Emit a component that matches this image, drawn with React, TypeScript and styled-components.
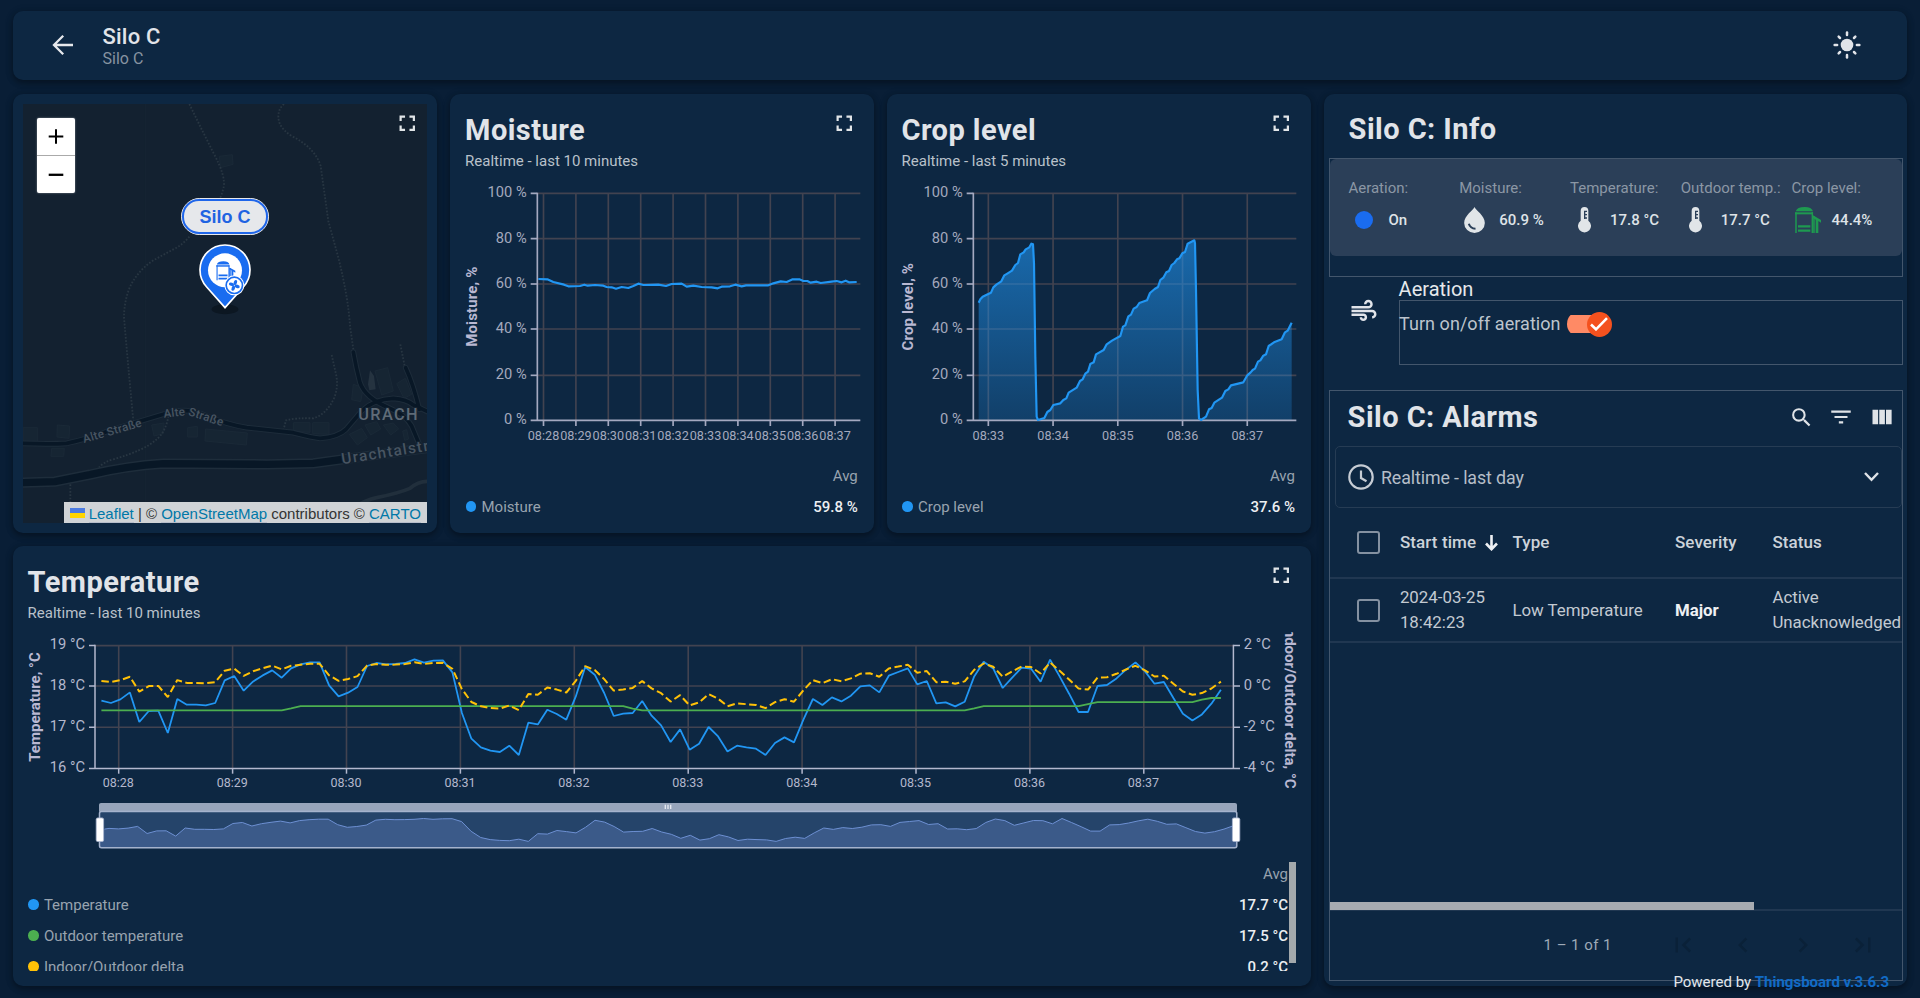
import React from "react";
import styled, { createGlobalStyle } from "styled-components";
import {
  MdAir,
  MdChevronLeft,
  MdChevronRight,
  MdFilterList,
  MdFirstPage,
  MdFullscreen,
  MdLastPage,
  MdSearch,
} from "react-icons/md";

const Global = createGlobalStyle`
  * { box-sizing: border-box; }
  body {
    margin: 0;
    background: #091e36;
    color: #e1e4e9;
    font-family: Roboto, "Liberation Sans", sans-serif;
    overflow: hidden;
  }
  svg { display: block; flex: none; }
  svg text { font-family: Roboto, "Liberation Sans", sans-serif; }
`;

const Page = styled.div`
  width: 1920px;
  height: 998px;
  padding: 11px 13px 0;
  position: relative;
  overflow: hidden;
`;

const Card = styled.section`
  background: #0d2742;
  border-radius: 10px;
  box-shadow: 0 3px 6px rgba(0, 0, 0, 0.32), 0 1px 10px rgba(0, 0, 0, 0.12);
  min-width: 0;
`;

const Header = styled(Card)`
  height: 69px;
  display: flex;
  align-items: center;
  padding: 0 46px 1.4px 38px;
`;

const HeaderText = styled.div`
  margin-left: 27.5px;
  flex: 1;
`;

const PageTitle = styled.h1`
  margin: 0;
  padding-top: 2px;
  font-size: 22px;
  font-weight: 500;
  line-height: 25px;
  letter-spacing: 0.2px;
`;

const PageSubtitle = styled.div`
  font-size: 16px;
  line-height: 19px;
  color: #8793a1;
`;

const Columns = styled.main`
  margin-top: 13.6px;
  display: grid;
  grid-template-columns: 1298px 583px;
  gap: 13px;
`;

const Left = styled.div`
  display: grid;
  grid-template-columns: 424.3px 423.3px 424px;
  grid-template-rows: 439.5px 440px;
  gap: 12.6px 13.2px;
`;

/* ---------- map ---------- */

const MapCard = styled(Card)`
  padding: 10px 10.3px 10px 10px;
`;

const MapView = styled.div`
  position: relative;
  height: 419.5px;
  overflow: hidden;
  background: #132130;
`;

const ZoomControl = styled.div`
  position: absolute;
  left: 14px;
  top: 14.4px;
  width: 38px;
  background: #fff;
  border-radius: 2px;
  box-shadow: 0 0 2px rgba(255, 255, 255, 0.5);
`;

const ZoomButton = styled.div<{ $divider?: boolean }>`
  height: ${(p) => (p.$divider ? "38px" : "37px")};
  display: flex;
  align-items: center;
  justify-content: center;
  border-bottom: ${(p) => (p.$divider ? "1px solid #aaa" : "none")};
`;

const MapFullscreen = styled.div`
  position: absolute;
  right: 6.5px;
  top: 6.5px;
`;

const PinLabel = styled.div`
  position: absolute;
  left: 158px;
  top: 94.6px;
  width: 88px;
  height: 37px;
  border: 1.5px solid #e8e9ec;
  border-radius: 19px;
  background: #e6e8eb;
  display: flex;
`;

const PinLabelInner = styled.div`
  flex: 1;
  border: 2px solid #1f66ea;
  border-radius: 17px;
  display: flex;
  align-items: center;
  justify-content: center;
  padding-top: 1px;
  font: bold 18px/20px "Liberation Sans", Arial, sans-serif;
  color: #1f63e2;
`;

const Attribution = styled.div`
  position: absolute;
  right: 0;
  bottom: 0;
  height: 21px;
  padding: 1px 6px 0;
  display: flex;
  align-items: center;
  gap: 4px;
  background: #d0d3d6;
  color: #333;
  font: 15px/21px "Liberation Sans", Arial, sans-serif;
  white-space: pre;
`;

const MapLink = styled.a`
  color: #0078a8;
  height: 21px;
  border-bottom: 2px solid #b6bdca;
`;

/* ---------- chart cards ---------- */

const ChartCard = styled(Card)<{ $wide?: boolean }>`
  grid-column: ${(p) => (p.$wide ? "1 / 4" : "auto")};
  display: flex;
  flex-direction: column;
  overflow: hidden;
`;

const CardHead = styled.div`
  display: flex;
  justify-content: space-between;
  height: 86px;
  padding: 19.5px 16px 0 14.6px;
`;

const Title = styled.h2`
  margin: 0;
  font-size: 29px;
  line-height: 34px;
  font-weight: 700;
  letter-spacing: 0.45px;
  color: #e1e4e9;
  white-space: nowrap;
`;

const Subtitle = styled.div`
  margin-top: 4px;
  font-size: 15px;
  line-height: 20px;
  color: #b9c1ca;
`;

const FullscreenButton = styled.div`
  margin-top: -3px;
`;

const ChartBody = styled.div`
  padding-left: 4.2px;
`;

const Legend = styled.div`
  padding: 0 16px 0 15.5px;
  margin-top: 10.5px;
  font-size: 15px;
`;

const ScrollLegend = styled.div`
  width: 1275px;
  height: 112.5px;
  margin-top: -3.6px;
  padding-left: 15.4px;
  overflow: hidden;
  font-size: 15px;
`;

const LegendRow = styled.div`
  display: flex;
  align-items: center;
  height: 31px;
  line-height: 20px;
  color: #98a3af;
`;

const Dot = styled.span<{ $color: string }>`
  width: 10.5px;
  height: 10.5px;
  border-radius: 50%;
  background: ${(p) => p.$color};
  margin-right: 5px;
`;

const LegendValue = styled.span<{ $strong?: boolean }>`
  margin-left: auto;
  color: ${(p) => (p.$strong ? "#eceff2" : "#98a3af")};
  font-weight: ${(p) => (p.$strong ? 500 : 400)};
`;

const WideLegend = styled.div`
  display: flex;
  height: 110px;
  margin-top: 1px;
`;

const Scrollbar = styled.div`
  width: 7px;
  height: 101px;
  margin-left: 1px;
  background: #a3a9ac;
`;

/* ---------- right panel ---------- */

const Panel = styled(Card)`
  height: 892px;
  padding: 0 4px 0 4.6px;
`;

const PanelTitle = styled.div`
  height: 64.3px;
  padding: 18px 0 0 20px;
`;

const Frame = styled.div<{ $h: number }>`
  height: ${(p) => p.$h}px;
  border: 1px solid #43566c;
`;

const InfoBox = styled.div`
  height: 97px;
  border-radius: 6px;
  background: #2b3f58;
  display: grid;
  grid-template-columns: repeat(5, 110.8px);
  padding: 19.5px 0 0 18.8px;
`;

const InfoLabel = styled.div`
  font-size: 15px;
  line-height: 20px;
  color: #8b97a5;
  white-space: nowrap;
`;

const InfoValue = styled.div`
  display: flex;
  align-items: center;
  height: 40px;
  margin-top: 2px;
  font-size: 15px;
  font-weight: 500;
  color: #dfe3e7;
`;

const InfoIcon = styled.div<{ $indent: number }>`
  width: 40px;
  padding-left: ${(p) => p.$indent}px;
  display: flex;
  align-items: center;
`;

const StateDot = styled.div`
  width: 18px;
  height: 18px;
  border-radius: 50%;
  background: #1a6cf0;
`;

const AerationRow = styled.div`
  display: flex;
  height: 113px;
`;

const AerationIcon = styled.div`
  width: 70px;
  padding: 19px 0 0 20px;
  color: #e1e4e9;
`;

const AerationBody = styled.div`
  flex: 1;
`;

const AerationTitle = styled.div`
  height: 23.2px;
  font-size: 20px;
  line-height: 24px;
  color: #e6e9ec;
`;

const AerationControl = styled.div`
  display: flex;
  align-items: center;
  height: 46px;
  margin-left: -0.6px;
  font-size: 18px;
  letter-spacing: 0.05px;
  color: #bcc4cd;
`;

const AerationLabel = styled.span`
  padding-bottom: 1.6px;
`;

const Toggle = styled.div`
  width: 45px;
  height: 26px;
  margin-left: 6px;
  display: flex;
  align-items: center;
  justify-content: flex-end;
  background: linear-gradient(#ff8a65, #ff8a65) 0 50% / 39px 18px no-repeat;
  border-radius: 13px;
`;

const Thumb = styled.div`
  width: 25px;
  height: 25px;
  border-radius: 50%;
  background: #f4511e;
  display: flex;
  align-items: center;
  justify-content: center;
`;

const Alarms = styled(Frame)`
  display: flex;
  flex-direction: column;
  overflow: hidden;
`;

const AlarmsHead = styled.div`
  display: flex;
  align-items: center;
  height: 55.4px;
  padding: 0 7px 2.2px 18px;
`;

const Tools = styled.div`
  margin-left: auto;
  display: flex;
  align-items: center;
  gap: 14px;
  color: #dfe3e7;
`;

const TimeWindow = styled.div`
  margin: 0 0 0 5.6px;
  height: 62px;
  border: 1px solid #263c54;
  border-radius: 5px;
  display: flex;
  align-items: center;
  padding: 0 22px 0 11.4px;
  font-size: 17.8px;
  letter-spacing: -0.1px;
  color: #b5bec8;
`;

const TimeText = styled.span`
  margin-left: 7.4px;
  flex: 1;
`;

const TableRow = styled.div<{ $head?: boolean }>`
  display: grid;
  grid-template-columns: 70.3px 112.5px 162.5px 97.5px 130px;
  align-items: center;
  height: ${(p) => (p.$head ? "70.6px" : "64.6px")};
  border-bottom: 2px solid #203751;
  font-size: 16.85px;
  line-height: 25px;
  color: ${(p) => (p.$head ? "#ccd3da" : "#c3cad2")};
  font-weight: ${(p) => (p.$head ? 500 : 400)};
`;

const HeadCell = styled.div`
  display: flex;
  align-items: center;
  gap: 9px;
  font-size: 17px;
  letter-spacing: 0.1px;
`;

const Cell = styled.div<{ $strong?: boolean }>`
  font-weight: ${(p) => (p.$strong ? 700 : 400)};
  color: ${(p) => (p.$strong ? "#eef0f3" : "inherit")};
  white-space: nowrap;
`;

const Checkbox = styled.div`
  width: 23px;
  height: 23px;
  margin-left: 27px;
  border: 2px solid #8491a1;
  border-radius: 3px;
`;

const TableSpace = styled.div`
  flex: 1;
`;

const HScroll = styled.div`
  height: 9.5px;
  border-bottom: 2px solid #203751;
`;

const HThumb = styled.div`
  width: 424.5px;
  height: 8px;
  background: #a7abb1;
`;

const Paginator = styled.div`
  height: 68.7px;
  display: flex;
  align-items: center;
  padding: 0 0 1px 214px;
  font-size: 15px;
  letter-spacing: 0.45px;
  color: #9eaab7;
`;

const PageNav = styled.div`
  display: flex;
  gap: 30px;
  margin-left: 56px;
  color: #0a2138;
`;

const Footer = styled.footer`
  position: absolute;
  right: 31px;
  bottom: 6px;
  font-size: 15px;
  line-height: 20px;
  color: #e3e6ea;
`;

const FooterLink = styled.a`
  color: #126bc6;
  font-weight: 700;
`;

/* ---------- drawings ---------- */

const BackArrow = () => (
  <svg width="24" height="24" viewBox="0 0 24 24" fill="none" stroke="#e6e8ec" strokeWidth="2.3">
    <path d="M22 12H3M12.2 2.8L3 12l9.2 9.2" />
  </svg>
);

const Sun = () => (
  <svg width="28" height="28" viewBox="-14 -14 28 28">
    <circle r="6.3" fill="#e1e4e9" />
    {[0, 45, 90, 135, 180, 225, 270, 315].map((a) => (
      <line
        key={a}
        x1="9.9"
        x2={a % 90 ? 11.8 : 12.4}
        y1="0"
        y2="0"
        transform={`rotate(${a})`}
        stroke="#e1e4e9"
        strokeWidth="2.5"
        strokeLinecap="round"
      />
    ))}
  </svg>
);

const Drop = () => (
  <svg width="21" height="26" viewBox="0 0 62 78">
    <path d="M31 0C34 9 62 26 62 48A31 30 0 0 1 0 48C0 26 28 9 31 0Z" fill="#e1e5e8" />
    <path d="M14 50Q18 64 34 65" fill="none" stroke="#2b3f58" strokeWidth="6" />
  </svg>
);

const Thermometer = () => (
  <svg width="13" height="26" viewBox="0 0 39 78">
    <path d="M8 12A11.5 12 0 0 1 31 12V41A19.5 19.5 0 1 1 8 41Z" fill="#e1e5e8" />
    <path d="M20 11V36M20 13H27M20 23H27M20 33H27" stroke="#2b3f58" strokeWidth="4" fill="none" />
  </svg>
);

const siloShape = (color: string) => (
  <g>
    <path d="M2 13Q6 0 29 0Q50 0 54 13Z" fill={color} />
    <rect x="0" y="16" width="54" height="6" fill={color} />
    <path d="M3 16V78M52 16V78M57 27V78" stroke={color} strokeWidth="4.5" />
    <path d="M54 25L78 39V47L70 42V78H62V38L54 33Z" fill={color} />
    <path d="M9 58H46M9 71H46" stroke={color} strokeWidth="7" />
  </g>
);

const Silo = () => (
  <svg width="26" height="26" viewBox="0 0 78 78">
    {siloShape("#1e9a50")}
  </svg>
);

const Fullscreen = () => <MdFullscreen size={26.5} color="#e1e5e8" />;

const tracks = [
  "M568 309L605 385L640 455Q680 530 670 562Q665 585 655 600",
  "M568 707Q550 730 520 745L460 778Q405 815 385 870Q372 910 372 950L386 1110L400 1260",
  "M852 309Q828 330 838 365Q848 388 875 405Q945 440 962 495L985 660L1015 770Q1045 890 1050 975L1060 1045",
  "M995 1062L1008 1120Q1016 1155 1003 1190Q980 1240 940 1252Q890 1250 858 1258L850 1288",
  "M1201 1030L1214 1095",
  "M507 1235Q500 1290 470 1315Q430 1350 340 1375Q310 1383 297 1400",
  "M211 1450V1510",
];

const roads = [
  "M60 1327Q150 1330 200 1327Q260 1315 340 1285L490 1240Q560 1215 620 1245Q680 1270 740 1280L880 1295Q940 1310 960 1312Q1015 1308 1038 1285L1085 1230Q1120 1195 1180 1192Q1220 1195 1240 1212L1290 1235",
  "M1060 1053Q1068 1100 1080 1145Q1095 1190 1165 1220Q1215 1240 1235 1275L1262 1340",
  "M1217 1100Q1240 1150 1258 1225",
];

const houses = [
  "69,1280 113,1280 113,1322 69,1326",
  "172,1272 209,1275 207,1312 171,1308",
  "155,1342 193,1342 191,1366 153,1366",
  "455,1272 492,1266 490,1298 462,1305",
  "563,1280 592,1276 592,1308 563,1308",
  "617,1284 742,1296 739,1332 615,1320",
  "880,1265 930,1265 930,1294 880,1290",
  "938,1265 987,1265 987,1300 938,1298",
  "1125,1110 1163,1100 1180,1170 1145,1182",
  "1190,1148 1216,1132 1235,1180 1212,1192",
  "1060,1150 1090,1160 1082,1202 1055,1196",
  "1048,1300 1085,1282 1102,1310 1072,1332",
  "1095,1272 1130,1262 1142,1284 1112,1302",
  "1150,1272 1180,1266 1196,1284 1172,1302",
  "1208,1290 1220,1286 1226,1314 1214,1318",
  "658,466 697,461 699,490 662,500",
];

const MapDrawing = () => (
  <svg width="404" height="420" viewBox="69 309 1212 1260">
    <path d="M436 309V1569" stroke="#162533" strokeWidth="3" />
    {houses.map((p) => (
      <polygon key={p} points={p} fill="#162533" stroke="#1a2937" strokeWidth="3" />
    ))}
    <path d="M1104 1150L1110 1108L1122 1125L1127 1165L1108 1168Z" fill="#253340" />
    {tracks.map((d) => (
      <path key={d} d={d} fill="none" stroke="#283642" strokeWidth="5.5" strokeDasharray="5 5" />
    ))}
    <path d="M1040 1530Q1100 1495 1130 1490Q1200 1475 1230 1462Q1255 1440 1285 1441" fill="none" stroke="#212f3c" strokeWidth="11" />
    {roads.map((d) => (
      <path key={d} d={d} fill="none" stroke="#1d2c3a" strokeWidth="17" strokeLinecap="round" />
    ))}
    <path d="M60 1445L165 1442L270 1421Q380 1395 490 1388L800 1390L940 1387L1080 1368L1290 1340" fill="none" stroke="#1e2d3b" strokeWidth="31" />
    {roads.map((d) => (
      <path key={d} d={d} fill="none" stroke="#081726" strokeWidth="11" strokeLinecap="round" />
    ))}
    <path d="M60 1445L165 1442L270 1421Q380 1395 490 1388L800 1390L940 1387L1080 1368" fill="none" stroke="#081726" strokeWidth="22" />
    <path d="M1030 1376L1290 1340" stroke="#132130" strokeWidth="25" />
    <g fill="#485562" stroke="#132130" strokeWidth="6" paintOrder="stroke">
      <text x="252" y="1326" fontSize="35" fontWeight="500" textLength="182" transform="rotate(-16 252 1326)">Alte Straße</text>
      <text x="492" y="1250" fontSize="35" fontWeight="500" textLength="64" transform="rotate(-6 492 1250)">Alte</text>
      <text x="563" y="1242" fontSize="35" fontWeight="500" textLength="108" transform="rotate(18 563 1242)">Straße</text>
      <text x="1075" y="1257" fontSize="49" fontWeight="500" textLength="178" fill="#5f6b77">URACH</text>
      <text x="1027" y="1390" fontSize="46" fontWeight="500" textLength="264" transform="rotate(-9 1027 1390)">Urachtalstr</text>
    </g>
    <ellipse cx="675" cy="925" rx="40" ry="15" fill="#0c1722" />
    <path d="M675 920L620 858A75 75 0 1 1 730 858Z" fill="#196cf0" stroke="#fff" strokeWidth="5" />
    <circle cx="675" cy="808" r="51" fill="#fff" />
    <g transform="translate(649 781) scale(0.73)">{siloShape("#196cf0")}</g>
    <circle cx="703" cy="853" r="26" fill="#fff" stroke="#fff" strokeWidth="8" />
    <circle cx="703" cy="853" r="24.5" fill="#fff" stroke="#196cf0" strokeWidth="5" />
    {[20, 110, 200, 290].map((a) => (
      <ellipse key={a} cx="703" cy="844" rx="5" ry="8" fill="#196cf0" transform={`rotate(${a} 703 853)`} />
    ))}
  </svg>
);

const axisColor = "#a4a9c0";
const gridColor = "#424350";
const yTicks: [number, string][] = [
  [310, "100 %"],
  [446, "80 %"],
  [582, "60 %"],
  [717, "40 %"],
  [856, "20 %"],
  [991, "0 %"],
];

const moistureLine =
  "295,567 322,568 340,576 372,584 385,589 420,588 433,584 443,587 465,585 490,587 500,591 515,592 528,596 545,591 565,594 580,588 595,581 610,585 655,584 678,588 695,582 725,581 740,590 760,587 785,591 815,592 833,595 845,590 870,589 886,584 905,589 918,586 985,586 1000,580 1022,574 1040,576 1058,568 1078,568 1090,573 1102,573 1112,578 1130,575 1142,579 1175,575 1190,573 1205,577 1217,572 1227,577 1250,576";

const cropLine =
  "308,638 313,628 320,620 332,614 345,608 352,592 362,583 376,574 385,556 395,550 408,542 418,525 426,519 433,493 443,487 449,478 460,472 466,461 471,463 474,520 478,800 482,980 486,990 505,984 514,966 523,960 532,945 553,940 562,930 571,925 578,908 602,893 612,873 620,868 628,851 636,845 643,822 653,817 660,793 683,780 692,763 708,752 733,738 741,710 748,706 757,679 765,674 773,656 782,651 790,639 813,631 822,609 836,597 846,591 853,570 862,563 871,547 879,543 887,525 895,519 903,508 910,505 919,490 927,486 935,461 955,451 957,460 960,600 965,900 969,985 975,990 990,980 999,958 1007,954 1015,938 1038,923 1048,903 1057,898 1065,886 1102,877 1114,856 1124,847 1130,840 1137,836 1146,815 1153,811 1162,797 1170,793 1178,768 1194,757 1217,748 1227,727 1235,722 1242,708 1247,698";

interface PercentChartProps {
  name: string;
  line: string;
  area?: boolean;
  xTicks: [number, string][];
}

const PercentChart = ({ name, line, area, xTicks }: PercentChartProps) => (
  <ChartBody>
    <svg width="414" height="270" viewBox="45 270 1242 810">
      <defs>
        <linearGradient id="fade" x1="0" y1="0" x2="0" y2="1">
          <stop offset="0" stopColor="#2196f3" stopOpacity="0.6" />
          <stop offset="1" stopColor="#2196f3" stopOpacity="0.22" />
        </linearGradient>
      </defs>
      <g stroke={gridColor} strokeWidth="5">
        {yTicks.slice(0, 5).map(([y]) => (
          <path key={y} d={`M292 ${y}H1261`} />
        ))}
        {xTicks.map(([x]) => (
          <path key={x} d={`M${x} 310V991`} />
        ))}
      </g>
      {area && <polygon points={`308,991 ${line} 1247,991`} fill="url(#fade)" />}
      <g stroke={axisColor} strokeWidth="5">
        <path d="M292 308V993M272 991H1261" />
        {yTicks.slice(0, 5).map(([y]) => (
          <path key={y} d={`M272 ${y}H292`} />
        ))}
        {xTicks.map(([x]) => (
          <path key={x} d={`M${x} 991V1008`} />
        ))}
      </g>
      <polyline points={line} fill="none" stroke="#2196f3" strokeWidth="6.5" strokeLinejoin="round" />
      <g fill="#a4a9bd">
        {yTicks.map(([y, t]) => (
          <text key={t} x="260" y={y === 310 ? 320 : y + 12} fontSize="44" textAnchor="end">
            {t}
          </text>
        ))}
        {xTicks.map(([x, t]) => (
          <text key={t} x={x} y="1049" fontSize="38" textAnchor="middle">
            {t}
          </text>
        ))}
      </g>
      <text
        transform="translate(110 650) rotate(-90)"
        fontSize="45"
        fontWeight="700"
        letterSpacing="0.4"
        textAnchor="middle"
        fill="#b9b8d2"
      >
        {name}
      </text>
    </svg>
  </ChartBody>
);

const minutes = (first: number, start: number, step: number, count: number): [number, string][] =>
  Array.from({ length: count }, (_, i) => [start + step * i, `08:${first + i}`]);

/* Plot height of each five-second temperature reading; 438 is 18 °C and 123 units are one degree. */
const readings = [
  483, 490, 479, 458, 547, 514, 513, 580, 478, 495, 495, 497, 490, 422, 409, 453, 425, 407, 392, 414, 386, 374, 368, 368,
  437, 470, 459, 442, 379, 370, 374, 373, 370, 359, 369, 363, 362, 398, 520, 597, 623, 633, 637, 618, 646, 549, 554, 510,
  523, 540, 470, 382, 405, 460, 529, 522, 520, 484, 528, 557, 607, 569, 630, 612, 562, 590, 635, 618, 623, 627, 646, 610,
  593, 608, 540, 478, 496, 473, 485, 468, 440, 437, 458, 408, 397, 386, 434, 424, 491, 488, 500, 486, 410, 366, 386, 445,
  414, 384, 387, 426, 360, 410, 462, 517, 517, 439, 436, 416, 390, 368, 395, 432, 427, 475, 522, 542, 524, 492, 450,
];

const outdoor = (i: number) => {
  if (i < 20) return 17.4;
  if (i === 20) return 17.45;
  if (i < 56) return 17.5;
  if (i === 56) return 17.44;
  if (i < 92) return 17.4;
  if (i === 92) return 17.45;
  if (i < 104) return 17.5;
  if (i === 104) return 17.55;
  if (i < 116) return 17.6;
  if (i === 116) return 17.66;
  return 17.7;
};

const px = (i: number) => 101.4 + 9.487 * i;
const py = (u: number) => 540 + u / 3;
const toLine = (f: (y: number, i: number) => number) =>
  readings.map((y, i) => `${px(i).toFixed(1)},${py(f(y, i)).toFixed(1)}`).join(" ");

const indoorLine = toLine((y) => y);
const outdoorLine = toLine((_, i) => 438 + (18 - outdoor(i)) * 123);
const deltaLine = toLine((y, i) => 438 - (18 - (y - 438) / 123 - outdoor(i)) * 61.5);
const sliderLine =
  "104.5,829.4 " +
  readings.map((y, i) => `${(109 + 9.53 * i).toFixed(1)},${(790 + (87 + (y - 362) * 0.24) / 3).toFixed(1)}`).join(" ");

const tempTicks: [number, string, string][] = [
  [645.9, "19 °C", "2 °C"],
  [686.3, "18 °C", "0 °C"],
  [727.5, "17 °C", "-2 °C"],
  [768.9, "16 °C", "-4 °C"],
];

const TemperatureChart = () => (
  <svg width="1298" height="229" viewBox="13 632.3 1298 229">
    <g stroke={gridColor} strokeWidth="1.6">
      {tempTicks.slice(0, 3).map(([y]) => (
        <path key={y} d={`M95 ${y}H1233`} />
      ))}
      {minutes(28, 118.7, 113.9, 10).map(([x]) => (
        <path key={x} d={`M${x} 645.7V768.7`} />
      ))}
    </g>
    <g stroke="#b3b8ce" strokeWidth="1.5">
      <path d="M95 645V769M1233.4 645V769M89 768.7H1240" />
      {tempTicks.slice(0, 3).map(([y]) => (
        <path key={y} d={`M89 ${y}H95M1233.4 ${y}H1240`} />
      ))}
      {minutes(28, 118.7, 113.9, 10).map(([x]) => (
        <path key={x} d={`M${x} 768.7V774`} />
      ))}
    </g>
    <g fill="none" strokeWidth="1.8" strokeLinejoin="bevel">
      <polyline points={indoorLine} stroke="#2196f3" />
      <polyline points={outdoorLine} stroke="#4caf50" />
      <polyline points={deltaLine} stroke="#ffc107" strokeDasharray="7.5 3.5" strokeWidth="2" />
    </g>
    <g fill="#b4b8cd" fontSize="14.7">
      {tempTicks.map(([y, l, r]) => (
        <g key={l}>
          <text x="85" y={y + 3.9} textAnchor="end">
            {l}
          </text>
          <text x="1243.8" y={y + 3.9}>
            {r}
          </text>
        </g>
      ))}
    </g>
    <g fill="#b4b8cd" fontSize="12.5" textAnchor="middle">
      {minutes(28, 118.3, 113.9, 10).map(([x, t]) => (
        <text key={t} x={x} y="787">
          {t}
        </text>
      ))}
    </g>
    <g fill="#b9b8d2" fontSize="15" fontWeight="700">
      <text transform="translate(39.6 707.3) rotate(-90)" textAnchor="middle">
        Temperature, °C
      </text>
      <text transform="translate(1284.8 789) rotate(90)" textAnchor="end">
        Indoor/Outdoor delta, °C
      </text>
    </g>
    <rect x="99" y="811.5" width="1138" height="37" fill="#25446a" />
    <polygon points={`99,829.4 ${sliderLine} 1237,848 99,848`} fill="#3b5a89" />
    <polyline points={sliderLine} fill="none" stroke="#6d90d3" strokeWidth="1" />
    <path d="M99 812V805Q99 803.3 101 803.3H1235Q1237 803.3 1237 805V812Z" fill="#97a5bb" />
    <rect x="99.5" y="811.8" width="1137.3" height="36.3" rx="2" fill="none" stroke="#a5b3cd" strokeWidth="1.5" />
    <path d="M665.3 805V809.3M668 805V809.3M670.7 805V809.3" stroke="#e8ecf3" strokeWidth="1.3" />
    <rect x="96.2" y="818.2" width="7.4" height="23.6" rx="1.5" fill="#fff" stroke="#acb8d1" strokeWidth="0.8" />
    <rect x="1232.4" y="818.2" width="7.4" height="23.6" rx="1.5" fill="#fff" stroke="#acb8d1" strokeWidth="0.8" />
  </svg>
);

interface LegendItemProps {
  color: string;
  name: string;
  value: string;
}

const LegendItem = ({ color, name, value }: LegendItemProps) => (
  <LegendRow>
    <Dot $color={color} />
    {name}
    <LegendValue $strong>{value}</LegendValue>
  </LegendRow>
);

const LegendHead = () => (
  <LegendRow>
    <LegendValue>Avg</LegendValue>
  </LegendRow>
);

const ChartHead = ({ title, period }: { title: string; period: string }) => (
  <CardHead>
    <div>
      <Title>{title}</Title>
      <Subtitle>{period}</Subtitle>
    </div>
    <FullscreenButton>
      <Fullscreen />
    </FullscreenButton>
  </CardHead>
);

const info: { label: string; value: string; indent: number; icon: React.ReactNode }[] = [
  { label: "Aeration:", value: "On", indent: 6.4, icon: <StateDot /> },
  { label: "Moisture:", value: "60.9 %", indent: 4.4, icon: <Drop /> },
  { label: "Temperature:", value: "17.8 °C", indent: 8.2, icon: <Thermometer /> },
  { label: "Outdoor temp.:", value: "17.7 °C", indent: 8.2, icon: <Thermometer /> },
  { label: "Crop level:", value: "44.4%", indent: 3.4, icon: <Silo /> },
];

export default function App() {
  return (
    <Page>
      <Global />
      <Header>
        <BackArrow />
        <HeaderText>
          <PageTitle>Silo C</PageTitle>
          <PageSubtitle>Silo C</PageSubtitle>
        </HeaderText>
        <Sun />
      </Header>

      <Columns>
        <Left>
          <MapCard>
            <MapView>
              <MapDrawing />
              <PinLabel>
                <PinLabelInner>Silo C</PinLabelInner>
              </PinLabel>
              <ZoomControl>
                <ZoomButton $divider>
                  <svg width="16" height="16" viewBox="0 0 16 16" stroke="#000" strokeWidth="2">
                    <path d="M0.7 8.5H15.3M8 1.2V15.8" />
                  </svg>
                </ZoomButton>
                <ZoomButton>
                  <svg width="16" height="16" viewBox="0 0 16 16" stroke="#000" strokeWidth="2.3">
                    <path d="M0.7 8.8H15.3" />
                  </svg>
                </ZoomButton>
              </ZoomControl>
              <MapFullscreen>
                <Fullscreen />
              </MapFullscreen>
              <Attribution>
                <svg width="15" height="10" viewBox="0 0 15 10">
                  <rect width="15" height="5" fill="#4c7be1" />
                  <rect y="5" width="15" height="5" fill="#ffd500" />
                </svg>
                <span>
                  <MapLink>Leaflet</MapLink> | © <MapLink>OpenStreetMap</MapLink> contributors © <MapLink>CARTO</MapLink>
                </span>
              </Attribution>
            </MapView>
          </MapCard>

          <ChartCard>
            <ChartHead title="Moisture" period="Realtime - last 10 minutes" />
            <PercentChart name="Moisture, %" line={moistureLine} xTicks={minutes(28, 310.5, 97.2, 10)} />
            <Legend>
              <LegendHead />
              <LegendItem color="#2196f3" name="Moisture" value="59.8 %" />
            </Legend>
          </ChartCard>

          <ChartCard>
            <ChartHead title="Crop level" period="Realtime - last 5 minutes" />
            <PercentChart name="Crop level, %" line={cropLine} area xTicks={minutes(33, 337, 194.2, 5)} />
            <Legend>
              <LegendHead />
              <LegendItem color="#2196f3" name="Crop level" value="37.6 %" />
            </Legend>
          </ChartCard>

          <ChartCard $wide>
            <ChartHead title="Temperature" period="Realtime - last 10 minutes" />
            <TemperatureChart />
            <WideLegend>
              <ScrollLegend>
                <LegendHead />
                <LegendItem color="#2196f3" name="Temperature" value="17.7 °C" />
                <LegendItem color="#4caf50" name="Outdoor temperature" value="17.5 °C" />
                <LegendItem color="#ffc107" name="Indoor/Outdoor delta" value="0.2 °C" />
              </ScrollLegend>
              <Scrollbar />
            </WideLegend>
          </ChartCard>
        </Left>

        <Panel>
          <PanelTitle>
            <Title>Silo C: Info</Title>
          </PanelTitle>
          <Frame $h={119}>
            <InfoBox>
              {info.map((item) => (
                <div key={item.label}>
                  <InfoLabel>{item.label}</InfoLabel>
                  <InfoValue>
                    <InfoIcon $indent={item.indent}>{item.icon}</InfoIcon>
                    {item.value}
                  </InfoValue>
                </div>
              ))}
            </InfoBox>
          </Frame>

          <AerationRow>
            <AerationIcon>
              <MdAir size={30} />
            </AerationIcon>
            <AerationBody>
              <AerationTitle>Aeration</AerationTitle>
              <Frame $h={65}>
                <AerationControl>
                  <AerationLabel>Turn on/off aeration</AerationLabel>
                  <Toggle>
                    <Thumb>
                      <svg width="18" height="14" viewBox="0 0 18 14" fill="none" stroke="#fff" strokeWidth="2.6">
                        <path d="M1 7.5L6 12.3L17 1.2" />
                      </svg>
                    </Thumb>
                  </Toggle>
                </AerationControl>
              </Frame>
            </AerationBody>
          </AerationRow>

          <Alarms $h={591}>
            <AlarmsHead>
              <Title>Silo C: Alarms</Title>
              <Tools>
                <MdSearch size={25} />
                <MdFilterList size={26} />
                <svg width="27" height="27" viewBox="0 0 24 24" fill="currentColor">
                  <path d="M10 18h5V5h-5v13zm-6 0h5V5H4v13zM16 5v13h5V5h-5z" />
                </svg>
              </Tools>
            </AlarmsHead>
            <TimeWindow>
              <svg width="26" height="26" viewBox="0 0 26 26" fill="none" stroke="#c6ccd4" strokeWidth="2.2">
                <circle cx="13" cy="13" r="11.7" />
                <path d="M13 6.5V14L18.5 17.2" />
              </svg>
              <TimeText>Realtime - last day</TimeText>
              <svg width="15" height="10" viewBox="0 0 15 10" fill="none" stroke="#dfe3e7" strokeWidth="2.4">
                <path d="M1 1L7.5 7.8L14 1" />
              </svg>
            </TimeWindow>
            <TableRow $head>
              <Checkbox />
              <HeadCell>
                Start time
                <svg width="13" height="17" viewBox="0 0 13 17" fill="none" stroke="#eef0f3" strokeWidth="2.6">
                  <path d="M6.5 1V15M1 9.5L6.5 15.2L12 9.5" />
                </svg>
              </HeadCell>
              <HeadCell>Type</HeadCell>
              <HeadCell>Severity</HeadCell>
              <HeadCell>Status</HeadCell>
            </TableRow>
            <TableRow>
              <Checkbox />
              <Cell>
                2024-03-25
                <br />
                18:42:23
              </Cell>
              <Cell>Low Temperature</Cell>
              <Cell $strong>Major</Cell>
              <Cell>
                Active
                <br />
                Unacknowledged
              </Cell>
            </TableRow>
            <TableSpace />
            <HScroll>
              <HThumb />
            </HScroll>
            <Paginator>
              1 – 1 of 1
              <PageNav>
                <MdFirstPage size={30} />
                <MdChevronLeft size={30} />
                <MdChevronRight size={30} />
                <MdLastPage size={30} />
              </PageNav>
            </Paginator>
          </Alarms>
        </Panel>
      </Columns>

      <Footer>
        Powered by <FooterLink>Thingsboard v.3.6.3</FooterLink>
      </Footer>
    </Page>
  );
}
